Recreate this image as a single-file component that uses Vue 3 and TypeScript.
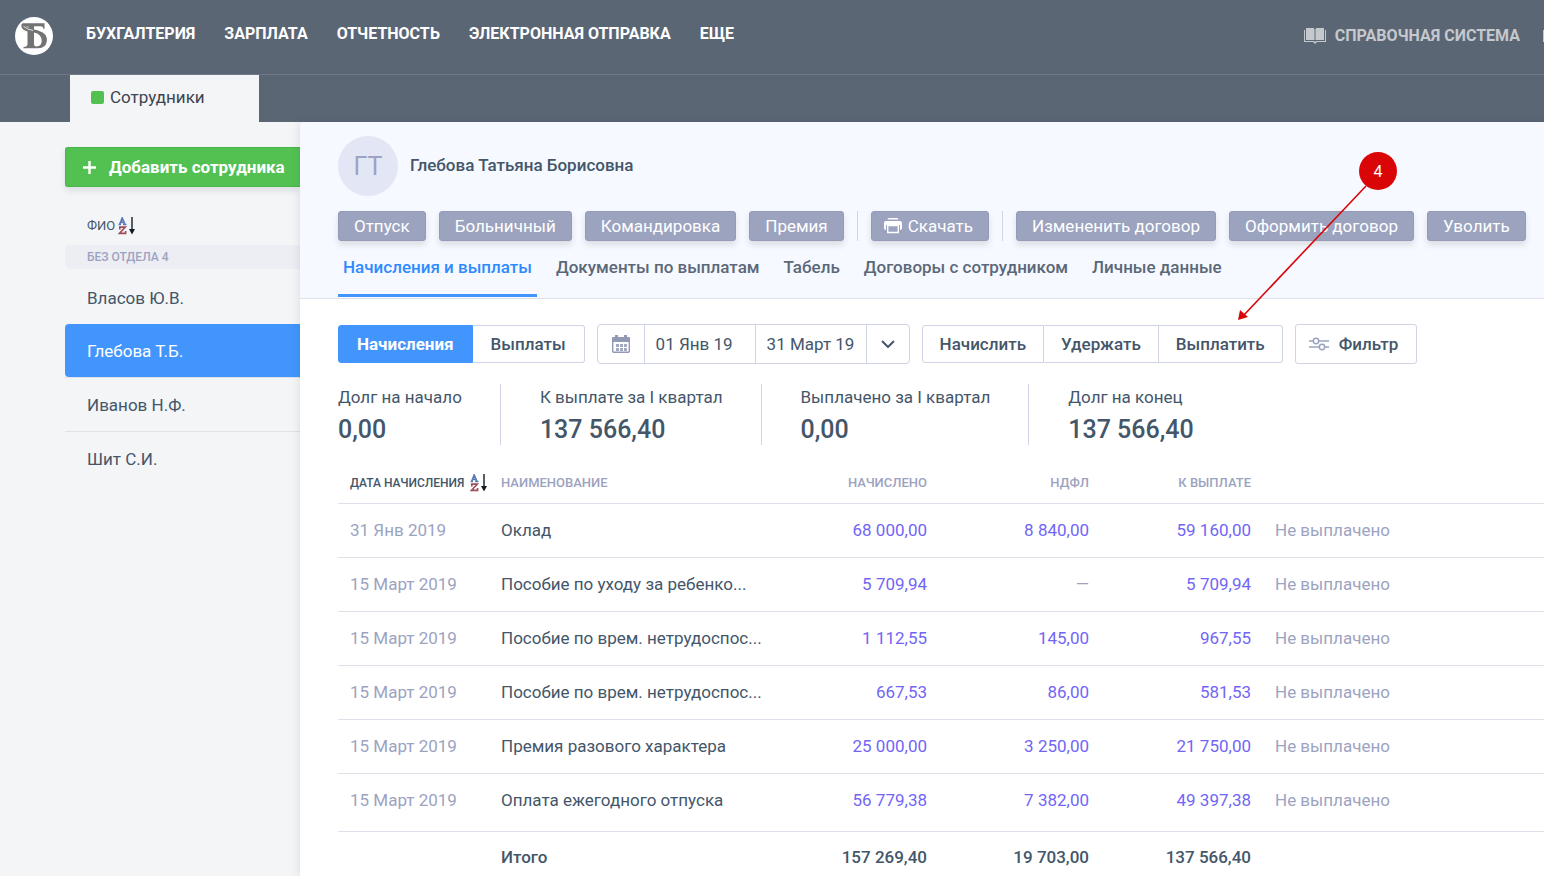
<script setup lang="ts">
import { ref } from 'vue'

interface Row {
  date: string
  name: string
  accrued: string
  tax: string
  payable: string
}

const menu = ['Бухгалтерия', 'Зарплата', 'Отчетность', 'Электронная отправка', 'Еще']
const employees = ['Власов Ю.В.', 'Глебова Т.Б.', 'Иванов Н.Ф.', 'Шит С.И.']
const selected = ref('Глебова Т.Б.')
const absences = ['Отпуск', 'Больничный', 'Командировка', 'Премия']
const contracts = ['Измененить договор', 'Оформить договор', 'Уволить']
const tabs = ['Начисления и выплаты', 'Документы по выплатам', 'Табель', 'Договоры с сотрудником', 'Личные данные']
const activeTab = ref(tabs[0])
const modes = ['Начисления', 'Выплаты']
const mode = ref(modes[0])
const operations = ['Начислить', 'Удержать', 'Выплатить']
const totals = [
  { label: 'Долг на начало', value: '0,00' },
  { label: 'К выплате за I квартал', value: '137 566,40' },
  { label: 'Выплачено за I квартал', value: '0,00' },
  { label: 'Долг на конец', value: '137 566,40' },
]
const rows: Row[] = [
  { date: '31 Янв 2019', name: 'Оклад', accrued: '68 000,00', tax: '8 840,00', payable: '59 160,00' },
  { date: '15 Март 2019', name: 'Пособие по уходу за ребенко...', accrued: '5 709,94', tax: '—', payable: '5 709,94' },
  { date: '15 Март 2019', name: 'Пособие по врем. нетрудоспос...', accrued: '1 112,55', tax: '145,00', payable: '967,55' },
  { date: '15 Март 2019', name: 'Пособие по врем. нетрудоспос...', accrued: '667,53', tax: '86,00', payable: '581,53' },
  { date: '15 Март 2019', name: 'Премия разового характера', accrued: '25 000,00', tax: '3 250,00', payable: '21 750,00' },
  { date: '15 Март 2019', name: 'Оплата ежегодного отпуска', accrued: '56 779,38', tax: '7 382,00', payable: '49 397,38' },
]
</script>

<template>
  <div class="app">
    <header class="top">
      <a class="logo" href="#" aria-label="Главная">
        <svg width="38" height="38" viewBox="0 0 38 38">
          <circle cx="19" cy="19" r="19" fill="#fff" />
          <g fill="#737373">
            <path d="M8.500 6.300h21v5.700h-1q-.3-2.700-3-2.700h-6.500v3.700l-5.500-1.500v-2H9q-2-1.700-.5-3.200z" />
            <path d="M6.500 7.300q.5-1 2-1l1.500 2q3 3 9 4.200 7.500 1.500 10.500 4.500 2.700 2.500 2.400 6.500-.6 7.800-8.700 7.800H8.500V30q4-.2 4-3V14.500q-3-.8-4.800-2.500Q5.700 9.700 6.500 7.300zM19 15.500v11.500q0 2.500 2.500 2.500 5.200-.2 5.200-5.500 0-7-7.700-8.500z" fill-rule="evenodd" />
          </g>
          <path d="M8.500 9.300q3.500 3.200 9.500 4.200" fill="none" stroke="#fff" stroke-width=".8" />
        </svg>
      </a>
      <nav class="menu">
        <a v-for="item in menu" :key="item" href="#">{{ item }}</a>
      </nav>
      <div class="help">
        <a href="#">
          <svg width="22" height="16" viewBox="0 0 22 16">
            <path d="M2 0h8v12H2zM12 0h8v12h-8z" fill="currentColor" />
            <path d="M10 1h2v11h-2z" fill="currentColor" opacity=".5" />
            <path d="M0 2h1v11h9l1 1 1-1h9V2h1v12h-9l-2 2-2-2H0z" fill="currentColor" />
          </svg>
          <span>Справочная система</span>
        </a>
        <a href="#" aria-label="Сообщения">
          <svg width="20" height="12" viewBox="0 0 20 12"><path d="M0 0h20v12H0z" fill="currentColor" /></svg>
        </a>
      </div>
    </header>

    <div class="sections">
      <a class="section" href="#"><i class="mark"></i>Сотрудники</a>
    </div>

    <div class="body">
      <aside class="side">
        <button class="add" type="button">
          <svg width="13" height="13" viewBox="0 0 13 13"><path d="M6.500 0v13M0 6.500h13" stroke="#fff" stroke-width="2.400" /></svg>
          Добавить сотрудника
        </button>
        <button class="sort side-sort" type="button">
          ФИО
          <svg width="17" height="18" viewBox="0 0 17 18">
            <path d="M.5 7.500h2.500M5 7.500h3.500M1.800 7 4.200 1 6.800 7M3 5.300h3" fill="none" stroke="#5c7ab8" stroke-width="1.700" />
            <path d="M1.800 12.500v-2.300h5.400L1.600 16.300h6v-2.300" fill="none" stroke="#9c4e5c" stroke-width="1.700" />
            <path d="M14 0v13" stroke="#444c55" stroke-width="1.800" />
            <path d="M11 12h6l-3 5.500z" fill="#111c26" />
          </svg>
        </button>
        <div class="group">БЕЗ ОТДЕЛА 4</div>
        <ul class="people">
          <li v-for="person in employees" :key="person">
            <button type="button" :class="{ chosen: person === selected }" @click="selected = person">{{ person }}</button>
          </li>
        </ul>
      </aside>

      <main class="panel">
        <section class="card">
          <div class="person">
            <div class="avatar">ГТ</div>
            <h1>Глебова Татьяна Борисовна</h1>
          </div>
          <div class="actions">
            <button v-for="a in absences" :key="a" type="button">{{ a }}</button>
            <i class="rule"></i>
            <button class="download" type="button">
              <svg width="18" height="16" viewBox="0 0 18 16">
                <path d="M3.500 1.500q0-1.500 1.500-1.500h8q1.500 0 1.500 1.500z" fill="#fff" />
                <path d="M2 3h14q2 0 2 2v5q0 2-2 2V7H2v5q-2 0-2-2V5q0-2 2-2z" fill="#fff" />
                <path d="M3.700 7.500h10.600v7H3.700z" fill="none" stroke="#fff" stroke-width="1.400" />
              </svg>
              Скачать
            </button>
            <i class="rule"></i>
            <button v-for="c in contracts" :key="c" type="button">{{ c }}</button>
          </div>
          <nav class="tabs">
            <a v-for="t in tabs" :key="t" href="#" :class="{ active: t === activeTab }" @click.prevent="activeTab = t">{{ t }}</a>
          </nav>
        </section>

        <section class="content">
          <div class="toolbar">
            <div class="joined modes">
              <button v-for="m in modes" :key="m" type="button" :class="{ on: m === mode }" @click="mode = m">{{ m }}</button>
            </div>
            <div class="period">
              <button class="cal" type="button" aria-label="Календарь">
                <svg width="18" height="18" viewBox="0 0 18 18">
                  <path d="M1 2h2V0h3v2h6V0h3v2h2q1 0 1 1v4H0V3q0-1 1-1z" fill="#9299b5" />
                  <path d="M.700 6v10.300q0 1 1 1h14.600q1 0 1-1V6" fill="none" stroke="#9299b5" stroke-width="1.400" />
                  <path d="M4 9h3v3H4zM8 9h3v3H8zM12 9h3v3h-3zM4 13h3v3H4zM8 13h3v3H8zM12 13h3v3h-3z" fill="#a3a9c2" />
                </svg>
              </button>
              <button type="button">01 Янв 19</button>
              <button type="button">31 Март 19</button>
              <button class="more" type="button" aria-label="Выбрать период">
                <svg width="14" height="8" viewBox="0 0 14 8"><path d="M1 1l6 6 6-6" fill="none" stroke="#43566a" stroke-width="2" /></svg>
              </button>
            </div>
            <div class="joined">
              <button v-for="o in operations" :key="o" type="button">{{ o }}</button>
            </div>
            <button class="filter" type="button">
              <svg width="20" height="14" viewBox="0 0 20 14" fill="none" stroke="#9ca3c1" stroke-width="1.500">
                <path d="M0 4h4M10 4h10M0 10h10M16 10h4" />
                <circle cx="7" cy="4" r="2.700" />
                <circle cx="13" cy="10" r="2.700" />
              </svg>
              Фильтр
            </button>
          </div>

          <dl class="totals">
            <div v-for="t in totals" :key="t.label">
              <dt>{{ t.label }}</dt>
              <dd>{{ t.value }}</dd>
            </div>
          </dl>

          <table>
            <colgroup>
              <col class="c-date" />
              <col class="c-name" />
              <col class="c-sum" />
              <col class="c-sum" />
              <col class="c-sum" />
              <col />
            </colgroup>
            <thead>
              <tr>
                <th>
                  <button class="sort" type="button">
                    ДАТА НАЧИСЛЕНИЯ
                    <svg width="17" height="18" viewBox="0 0 17 18">
                      <path d="M.5 7.500h2.500M5 7.500h3.500M1.800 7 4.200 1 6.800 7M3 5.300h3" fill="none" stroke="#5c7ab8" stroke-width="1.700" />
                      <path d="M1.800 12.500v-2.300h5.400L1.600 16.300h6v-2.300" fill="none" stroke="#9c4e5c" stroke-width="1.700" />
                      <path d="M14 0v13" stroke="#444c55" stroke-width="1.800" />
                      <path d="M11 12h6l-3 5.500z" fill="#111c26" />
                    </svg>
                  </button>
                </th>
                <th>НАИМЕНОВАНИЕ</th>
                <th class="num">НАЧИСЛЕНО</th>
                <th class="num">НДФЛ</th>
                <th class="num">К ВЫПЛАТЕ</th>
                <th></th>
              </tr>
            </thead>
            <tbody>
              <tr v-for="(r, i) in rows" :key="i">
                <td class="muted">{{ r.date }}</td>
                <td>{{ r.name }}</td>
                <td class="num">{{ r.accrued }}</td>
                <td class="num" :class="{ muted: r.tax === '—' }">{{ r.tax }}</td>
                <td class="num">{{ r.payable }}</td>
                <td class="muted">Не выплачено</td>
              </tr>
            </tbody>
            <tfoot>
              <tr>
                <td></td>
                <td>Итого</td>
                <td class="num">157 269,40</td>
                <td class="num">19 703,00</td>
                <td class="num">137 566,40</td>
                <td></td>
              </tr>
            </tfoot>
          </table>
        </section>

        <div class="callout">
          <svg width="160" height="170" viewBox="0 0 160 170">
            <path d="M128 34 5 164" stroke="#da0507" stroke-width="1.600" />
            <path d="M0 168 2 158 10 165z" fill="#da0507" />
            <circle cx="140" cy="19" r="19" fill="#da0507" />
            <text x="140" y="25" text-anchor="middle" fill="#fff">4</text>
          </svg>
        </div>
      </main>
    </div>
  </div>
</template>

<style>
body {
  margin: 0;
  overflow: hidden;
}
</style>

<style scoped>
.app {
  display: flex;
  flex-direction: column;
  height: 100vh;
  overflow: hidden;
  background: #f4f5f7;
  color: #43566a;
  font: 400 17px/22px Roboto, "Liberation Sans", sans-serif;
}
.app * {
  box-sizing: border-box;
}
a {
  color: inherit;
  text-decoration: none;
}
button {
  margin: 0;
  padding: 0;
  border: 0;
  background: none;
  color: inherit;
  font: inherit;
  white-space: nowrap;
  cursor: pointer;
}
svg {
  display: block;
  flex: none;
}

.top {
  display: flex;
  align-items: flex-start;
  flex: none;
  height: 75px;
  padding-left: 15px;
  border-bottom: 1px solid #6f7988;
  background: #5b6675;
  color: #fff;
  font-size: 16px;
  font-weight: 700;
  text-transform: uppercase;
  white-space: nowrap;
}
.logo {
  margin-top: 17px;
}
.menu {
  display: flex;
  gap: 29px;
  margin: 23px 0 0 33px;
}
.help {
  display: flex;
  gap: 23px;
  margin: 25px -19px 0 auto;
  color: #c5c9ce;
}
.help a {
  display: flex;
  align-items: center;
  gap: 9px;
}

.sections {
  display: flex;
  flex: none;
  height: 47px;
  padding-left: 70px;
  background: #5b6675;
}
.section {
  display: flex;
  align-items: center;
  gap: 6px;
  width: 189px;
  padding: 0 0 3px 21px;
  background: #f4f5f7;
  color: #3b4450;
}
.mark {
  width: 13px;
  height: 13px;
  border-radius: 2px;
  background: #52c152;
}

.body {
  display: flex;
  flex: 1;
  min-height: 0;
}
.side {
  flex: none;
  width: 300px;
  padding: 25px 0 0 65px;
}
.add {
  display: flex;
  align-items: center;
  gap: 13px;
  width: 100%;
  height: 40px;
  padding-left: 17px;
  border: 1px solid #48b548;
  border-right: 0;
  border-radius: 3px 0 0 3px;
  background: #52c152;
  box-shadow: 0 4px 6px rgba(60, 70, 90, 0.12);
  color: #fff;
  font-weight: 700;
}
.sort {
  display: flex;
  align-items: center;
  gap: 3px;
  color: #43566a;
  font-size: 13px;
  font-weight: 400;
  line-height: 18px;
}
th .sort {
  gap: 6px;
  font-size: 12px;
  font-weight: 500;
}
.side-sort {
  margin: 30px 0 10px 22px;
}
.group {
  height: 24px;
  padding-left: 22px;
  border-radius: 5px 0 0 5px;
  background: #edeef4;
  color: #9ca3c1;
  font-size: 12px;
  font-weight: 500;
  line-height: 24px;
}
.people {
  margin: 2px 0 0;
  padding: 0;
  list-style: none;
}
.people li {
  height: 54px;
  border-bottom: 1px solid #e0e2e9;
}
.people li:first-child {
  height: 53px;
  border-bottom: 0;
}
.people li:last-child {
  border-bottom: 0;
}
.people button {
  width: 100%;
  height: 53px;
  padding-left: 22px;
  border-radius: 4px 0 0 4px;
  text-align: left;
}
.people .chosen {
  background: #4295fc;
  color: #fff;
}

.panel {
  position: relative;
  flex: 1;
  min-width: 0;
  border-radius: 4px 0 0 0;
  background: #fff;
  box-shadow: 0 0 10px rgba(50, 60, 80, 0.15);
  white-space: nowrap;
}
.card {
  padding: 14px 0 0 38px;
  border-bottom: 1px solid #dfe1ea;
  border-radius: 4px 0 0 0;
  background: #f6f9ff;
}
.person {
  display: flex;
  align-items: center;
  gap: 12px;
}
.avatar {
  width: 60px;
  height: 60px;
  border-radius: 50%;
  background: #e3e6f4;
  color: #9ca3c1;
  font-size: 25px;
  line-height: 61px;
  text-align: center;
}
h1 {
  margin: 0;
  padding-bottom: 2px;
  font-size: 17px;
  font-weight: 500;
}
.actions {
  display: flex;
  gap: 13px;
  margin-top: 15px;
}
.actions button {
  height: 30px;
  padding: 0 15px;
  border: 1px solid #949bb9;
  border-radius: 3px;
  background: #9ca3bf;
  box-shadow: 0 4px 6px rgba(60, 60, 60, 0.14);
  color: #fff;
}
.actions .download {
  display: flex;
  align-items: center;
  gap: 6px;
  padding: 0 15px 0 12px;
}
.rule {
  flex: none;
  width: 1px;
  height: 30px;
  background: #cfd4e6;
}
.tabs {
  display: flex;
  gap: 14px;
  margin-top: 15px;
  font-weight: 500;
  color: #5b6878;
}
.tabs a {
  padding: 0 5px 16px;
  border-bottom: 3px solid transparent;
  margin-bottom: 1px;
}
.tabs .active {
  border-color: #4295fc;
  color: #2e8bff;
}

.content {
  padding: 25px 0 0 38px;
}
.toolbar {
  display: flex;
  align-items: center;
  gap: 12px;
}
.joined {
  display: flex;
  font-weight: 500;
}
.joined button {
  height: 38px;
  padding: 0 17px;
  border: 1px solid #cfd4e6;
}
.modes button {
  padding: 0 18px;
}
.joined button + button {
  border-left: 0;
}
.joined button:first-child {
  border-radius: 3px 0 0 3px;
}
.joined button:last-child {
  border-radius: 0 3px 3px 0;
}
.joined .on {
  border-color: #4295fc;
  background: #4295fc;
  color: #fff;
  font-weight: 700;
}
.period {
  display: flex;
  height: 40px;
  border: 1px solid #cfd4e6;
  border-radius: 4px;
}
.period button {
  width: 111px;
  padding-left: 11px;
  text-align: left;
}
.period button + button {
  border-left: 1px solid #cfd4e6;
}
.period .cal,
.period .more {
  display: grid;
  place-items: center;
  width: 46px;
  padding: 0;
}
.period .more {
  width: 43px;
}
.filter {
  display: flex;
  align-items: center;
  gap: 10px;
  height: 40px;
  padding: 0 18px 0 13px;
  border: 1px solid #cfd4e6;
  border-radius: 3px;
  font-weight: 500;
}

.totals {
  display: flex;
  gap: 39px;
  margin: 20px 0 0;
}
.totals div {
  height: 61px;
  padding: 2px 38px 0 0;
  border-right: 1px solid #cfd4e6;
}
.totals div:last-child {
  border-right: 0;
}
.totals dd {
  margin: 8px 0 0;
  font-size: 25px;
  font-weight: 500;
  line-height: 28px;
}

table {
  width: 100%;
  margin-top: 17px;
  border-collapse: collapse;
  table-layout: fixed;
}
.c-date {
  width: 151px;
}
.c-name {
  width: 288px;
}
.c-sum {
  width: 162px;
}
th,
td {
  padding: 0 12px;
  text-align: left;
  font-weight: 400;
}
th {
  height: 41px;
  padding-top: 2px;
  overflow: hidden;
  color: #9ca3c1;
  font-size: 13px;
  font-weight: 500;
}
tr {
  border-bottom: 1px solid #dfe1ea;
}
td {
  height: 54px;
}
tbody tr:last-child td {
  height: 58px;
  padding-bottom: 4px;
}
tbody .num {
  color: #7265f5;
}
tbody .muted {
  color: #9ca3c1;
}
.num {
  text-align: right;
}
tfoot td {
  height: 52px;
  font-weight: 500;
}

.callout {
  position: absolute;
  top: 30px;
  left: 938px;
  pointer-events: none;
}
.callout text {
  font-size: 16px;
}
</style>
